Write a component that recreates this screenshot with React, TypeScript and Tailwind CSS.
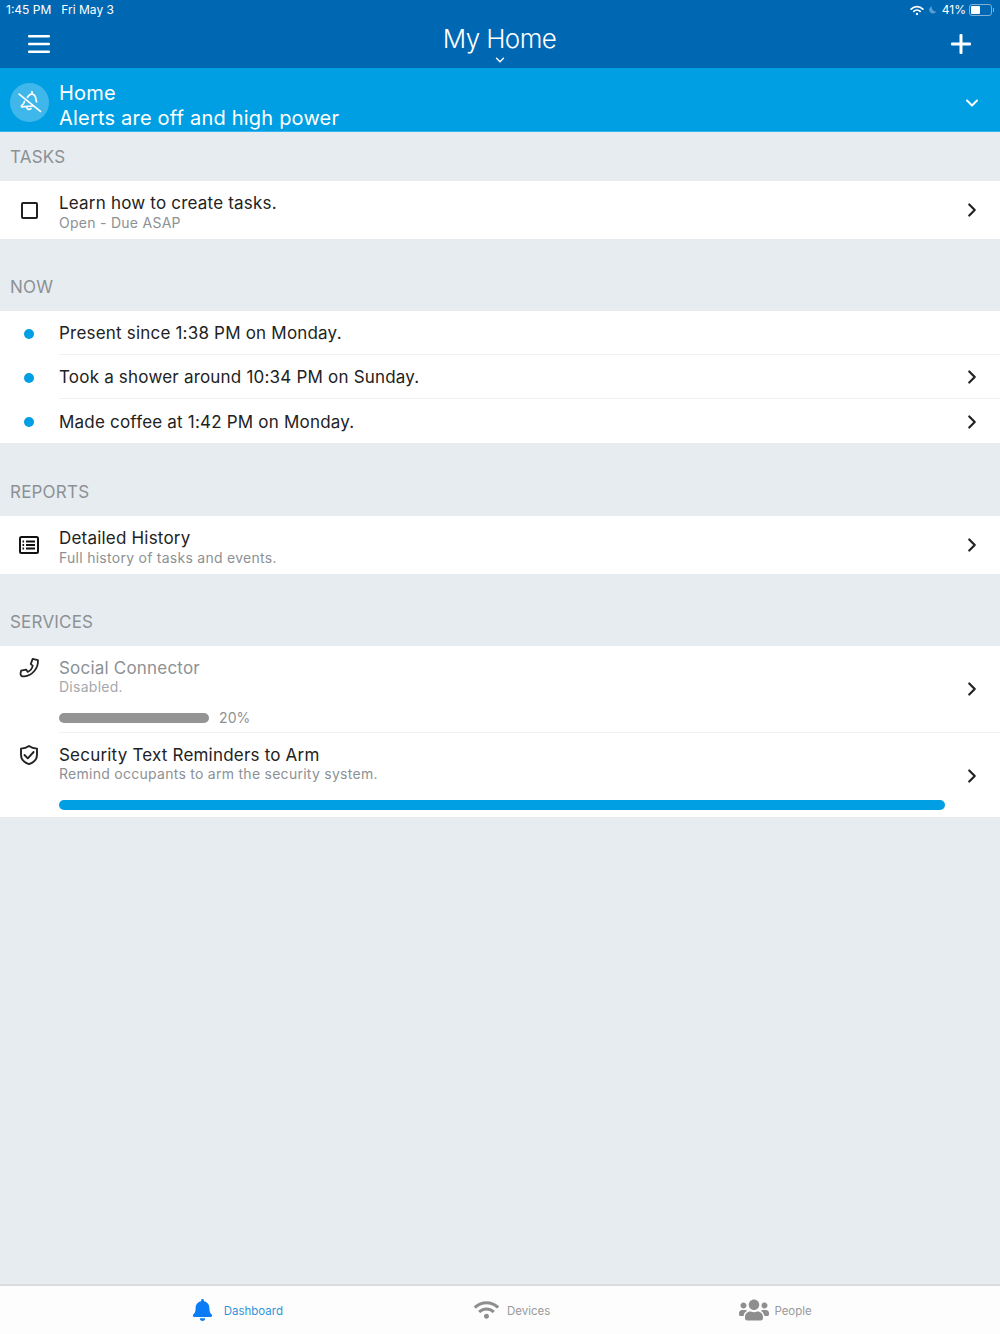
import React from "react";
import { ChevronDown, ChevronRight } from "lucide-react";
import { FaBell, FaUsers, FaWifi } from "react-icons/fa";

const Chevron = () => <ChevronRight className="w-[22px] h-[22px] text-[#222] shrink-0" strokeWidth={2.4} />;

function Section({ title, first }: { title: string; first?: boolean }) {
  return (
    <div className={first ? "h-[49px] flex items-center px-[10px] pt-[1px]" : "h-[72px] flex items-end px-[10px] pb-[12px]"}>
      <span className="text-[17px] leading-[24px] text-[#8c9195] tracking-[0.2px]">{title}</span>
    </div>
  );
}

function TwoLine({ title, sub, icon }: { title: string; sub: string; icon: React.ReactNode }) {
  return (
    <div className="h-[58px] bg-white flex items-center">
      <div className="w-[59px] flex justify-center pr-[1px] shrink-0">{icon}</div>
      <div className="flex-1 pt-[3px]">
        <div className="text-[17px] leading-[22px] text-[#222] tracking-[0.2px]">{title}</div>
        <div className="text-[14px] leading-[18px] text-[#8c9195] tracking-[0.27px]">{sub}</div>
      </div>
      <div className="pr-[17px]"><Chevron /></div>
    </div>
  );
}

function NowRow({ text, chevron, border }: { text: string; chevron?: boolean; border?: boolean }) {
  return (
    <div className="h-[44px] flex items-center">
      <div className="w-[59px] flex justify-center pr-[1px] pt-[1px] shrink-0">
        <div className="w-[10px] h-[10px] rounded-full bg-[#009fe3]" />
      </div>
      <div className={`flex-1 h-full flex items-center pr-[17px] pt-[1px] ${border ? "border-b border-[#f0f2f4]" : ""}`}>
        <span className="flex-1 pt-[2px] text-[17px] text-[#222] tracking-[0.2px]">{text}</span>
        {chevron && <Chevron />}
      </div>
    </div>
  );
}

export default function App() {
  return (
    <div className="w-[1000px] h-[1334px] flex flex-col bg-[#e7ecf0] overflow-hidden font-['Inter',sans-serif]">
      <header className="h-[68px] bg-[#0068b3] text-white shrink-0">
        <div className="h-[20px] flex items-center justify-between pl-[6px] pr-[6px] text-[12px]">
          <div className="flex gap-[10px]"><span>1:45 PM</span><span>Fri May 3</span></div>
          <div className="flex items-center">
            <svg viewBox="0 0 24 18" className="w-[14px] h-[11px]" fill="none" stroke="white" strokeWidth="3" strokeLinecap="round">
              <path d="M2 6.5a14 14 0 0 1 20 0" /><path d="M6.5 10.5a8 8 0 0 1 11 0" /><circle cx="12" cy="15" r="2" fill="white" stroke="none" />
            </svg>
            <svg viewBox="0 0 12 12" className="w-[9px] h-[10px] ml-[4px] mr-[5px]"><path d="M5 1a5 5 0 1 0 6 7 6 6 0 0 1-6-7z" fill="#5b9bd0" /></svg>
            <span>41%</span>
            <div className="flex items-center ml-[3px]">
              <div className="w-[23px] h-[12px] rounded-[3px] border border-[#7fb0d8] p-[1px]">
                <div className="w-[9px] h-full bg-white rounded-[1px]" />
              </div>
              <div className="w-[1px] h-[4px] ml-[1px] bg-[#7fb0d8]" />
            </div>
          </div>
        </div>
        <div className="h-[48px] flex items-start justify-between pl-[28px] pr-[29px]">
          <svg viewBox="0 0 22 18" className="w-[22px] h-[18px] mt-[15px]" fill="white">
            <rect x="0" y="0" width="22" height="2.6" rx="1" /><rect x="0" y="7.7" width="22" height="2.6" rx="1" /><rect x="0" y="15.4" width="22" height="2.6" rx="1" />
          </svg>
          <div className="flex flex-col items-center -ml-[2px]">
            <span className="text-[26px] leading-[38px] font-light tracking-[-0.6px]">My Home</span>
            <ChevronDown className="w-[14px] h-[14px] -mt-[5px]" strokeWidth={2.4} />
          </div>
          <svg viewBox="0 0 20 20" className="w-[20px] h-[20px] mt-[14px]" fill="white">
            <rect x="8.5" y="0" width="3" height="20" rx="1" /><rect x="0" y="8.5" width="20" height="3" rx="1" />
          </svg>
        </div>
      </header>

      <div className="h-[64px] bg-[#009fe3] text-white flex items-center shrink-0 border-b border-[#33b5ec]">
        <div className="w-[59px] flex justify-center pr-[1px] pt-[6px] shrink-0">
          <div className="w-[39px] h-[39px] rounded-full bg-[#40b7ea] flex items-center justify-center">
            <svg viewBox="0 0 24 24" className="w-[25px] h-[25px]" fill="none" stroke="white" strokeWidth="1.6" strokeLinecap="round" strokeLinejoin="round">
              <path d="M2 4l20.5 16.5" />
              <path d="M10 7c1-1.5 2-2.6 3.4-3 2.3-.4 4.1 1.2 4.5 3.4.2 1.3.3 2.8 1 4" />
              <path d="M7.2 11c-.2 1.6-1.4 3-3 4.2l.2 1 11.2-.8" />
              <path d="M9.5 17c.4 1.8 2.8 2.2 3.9.7" />
              <path d="M14.6 3l-.3-1.4" />
            </svg>
          </div>
        </div>
        <div className="flex-1 text-[20px] leading-[25px] pt-[13px] tracking-[0.2px]">
          <div>Home</div>
          <div>Alerts are off and high power</div>
        </div>
        <ChevronDown className="w-[20px] h-[20px] mr-[18px] mt-[6px]" strokeWidth={2.4} />
      </div>

      <Section title="TASKS" first />
      <TwoLine
        title="Learn how to create tasks."
        sub="Open - Due ASAP"
        icon={<div className="w-[17px] h-[17px] rounded-[2px] border-2 border-[#222]" />}
      />

      <Section title="NOW" />
      <div className="bg-white">
        <NowRow text="Present since 1:38 PM on Monday." border />
        <NowRow text="Took a shower around 10:34 PM on Sunday." chevron border />
        <NowRow text="Made coffee at 1:42 PM on Monday." chevron />
      </div>

      <div className="h-[1px]" />
      <Section title="REPORTS" />
      <TwoLine
        title="Detailed History"
        sub="Full history of tasks and events."
        icon={
          <svg viewBox="0 0 20 18" className="w-[20px] h-[18px]" fill="none" stroke="#111" strokeWidth="2">
            <rect x="1" y="1" width="18" height="16" rx="1.5" />
            <path d="M7 5.5h9M7 9h9M7 12.5h9M3.5 5.5h1.6M3.5 9h1.6M3.5 12.5h1.6" />
          </svg>
        }
      />

      <Section title="SERVICES" />
      <div className="bg-white">
        <div className="h-[87px] flex">
          <div className="w-[59px] flex justify-center pr-[1px] pt-[11px] shrink-0">
            <svg viewBox="0 0 20 20" className="w-[21px] h-[21px]" fill="none" stroke="#222" strokeWidth="1.7" strokeLinejoin="round">
              <path d="M13 1.8l5 1.2c.7 7.5-5.5 15-13 15.5-2.5.2-3.8-1-3.5-3l.5-2.5 4.8-1 1.5 2.2c2.4-1 4.2-3.3 4.8-6l-1.9-1.4z" />
            </svg>
          </div>
          <div className="flex-1 flex items-center border-b border-[#f0f2f4] pr-[17px]">
            <div className="flex-1 self-start pt-[11px]">
              <div className="text-[17px] leading-[22px] text-[#8c9195] tracking-[0.2px]">Social Connector</div>
              <div className="text-[14px] leading-[18px] -mt-[1px] text-[#a5a9ad] tracking-[0.27px]">Disabled.</div>
              <div className="flex items-center gap-[10px] mt-[13px]">
                <div className="w-[150px] h-[10px] rounded-full bg-[#949494]" />
                <span className="text-[14px] leading-[18px] text-[#8c9195] tracking-[0.1px]">20%</span>
              </div>
            </div>
            <Chevron />
          </div>
        </div>
        <div className="h-[84px] flex">
          <div className="w-[59px] flex justify-center pr-[1px] pt-[11px] shrink-0">
            <svg viewBox="0 0 22 22" className="w-[22px] h-[22px]" fill="none" stroke="#222" strokeWidth="1.9" strokeLinecap="round" strokeLinejoin="round">
              <path d="M11 2c2.4 1.6 5 2.4 8 2.6v6.2c0 4.6-3.4 7.8-8 9.4-4.6-1.6-8-4.8-8-9.4V4.6C6 4.4 8.6 3.6 11 2z" />
              <path d="M6.5 11l3.3 3.3 5.8-6.3" />
            </svg>
          </div>
          <div className="flex-1 flex items-center pr-[17px]">
            <div className="flex-1 self-start pt-[11px] pr-[16px]">
              <div className="text-[17px] leading-[22px] text-[#222] tracking-[0.2px]">Security Text Reminders to Arm</div>
              <div className="text-[14px] leading-[18px] -mt-[1px] text-[#8c9195] tracking-[0.27px]">Remind occupants to arm the security system.</div>
              <div className="h-[10px] rounded-full bg-[#009fe3] mt-[17px]" />
            </div>
            <div className="pt-[2px]"><Chevron /></div>
          </div>
        </div>
      </div>

      <div className="flex-1" />

      <footer className="h-[50px] bg-[#fdfdfe] border-t-2 border-[#d9dcde] shrink-0 flex items-center text-[11.5px] pt-[2px]">
        <div className="w-[474px] flex items-center justify-end pr-[191px] gap-[11px] text-[#2f95d8]">
          <FaBell className="w-[21px] h-[22px] -mt-[2px] text-[#0a7cf5]" />
          <span className="pt-[2px]">Dashboard</span>
        </div>
        <div className="flex items-center gap-[8px] text-[#9a9a9a]">
          <FaWifi className="w-[25px] h-[20px] -mt-[2px] text-[#8e8e8e]" />
          <span className="pt-[2px]">Devices</span>
        </div>
        <div className="flex items-center gap-[5px] text-[#9a9a9a] ml-[189px]">
          <FaUsers className="w-[30px] h-[24px] -mt-[2px] text-[#8e8e8e]" />
          <span className="pt-[2px]">People</span>
        </div>
      </footer>
    </div>
  );
}
